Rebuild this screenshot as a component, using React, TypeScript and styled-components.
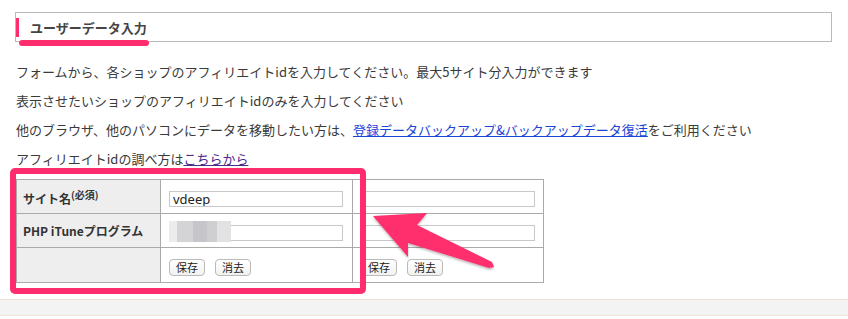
import styled, { createGlobalStyle } from "styled-components";

const PINK = "#ff2d6d";

const GlobalStyle = createGlobalStyle`
  body {
    margin: 0;
    background: #fff;
    font-family: "Noto Sans CJK JP", "Noto Sans", sans-serif;
  }
`;

const Page = styled.div`
  position: relative;
  width: 848px;
  height: 319px;
  overflow: hidden;
`;

const Content = styled.div`
  padding: 12px 0 0 15px;
`;

const HeadingBox = styled.div`
  width: 815px;
  height: 28px;
  border: 1px solid #bbb;
  display: flex;
  align-items: center;
`;

const HeadingBar = styled.span`
  width: 3px;
  height: 19px;
  background: ${PINK};
  margin-right: 11px;
`;

const HeadingText = styled.h2`
  margin: 0;
  font-size: 13px;
  font-weight: bold;
  color: #444;
`;

const Notes = styled.div`
  margin-top: 15px;
  padding-left: 1px;
  font-size: 13px;
  line-height: 29px;
  color: #3a3a3a;
`;

const Note = styled.p`
  margin: 0;
  white-space: nowrap;
`;

const Link = styled.a<{ $visited?: boolean }>`
  color: ${(p) => (p.$visited ? "#4b2a8c" : "#1a44d6")};
  text-decoration: underline;
`;

const Table = styled.table`
  margin: 6px 0 0 1px;
  border-collapse: collapse;
  border: 1px solid #aaa;
`;

const Row = styled.tr<{ $h?: number }>`
  height: ${(p) => p.$h ?? 34}px;
`;

const HeadCell = styled.th`
  width: 131px;
  background: #eee;
  border: 1px solid #aaa;
  text-align: left;
  padding: 0 6px;
  font-size: 12px;
  font-weight: bold;
  color: #333;
`;

const Sup = styled.sup`
  font-size: 10px;
  font-weight: bold;
`;

const Cell = styled.td<{ $w: number }>`
  width: ${(p) => p.$w}px;
  border: 1px solid #aaa;
  padding: 0 8px;
  box-sizing: border-box;
`;

const InputWrap = styled.span`
  position: relative;
  display: inline-block;
  vertical-align: middle;
`;

const Input = styled.input`
  display: block;
  width: 174px;
  height: 16px;
  box-sizing: border-box;
  border: 1px solid #c8c8c8;
  padding: 0 3px;
  font-family: "Noto Sans", sans-serif;
  font-size: 13px;
  color: #222;
  background: #fff;
`;

const Mosaic = styled.span`
  position: absolute;
  left: 0;
  top: -4px;
  width: 62px;
  height: 21px;
  background: linear-gradient(
    to right,
    #ececec 0 8px,
    #d4d4d6 8px 24px,
    #c6c6ca 24px 38px,
    #cfcfd1 38px 48px,
    #e2e2e2 48px 62px
  );
`;

const Button = styled.button`
  width: 36px;
  height: 17px;
  padding: 0;
  margin-right: 10px;
  border: 1px solid #bbb;
  border-radius: 4px;
  background: linear-gradient(#fff, #f1f1f1);
  font-family: "Noto Sans CJK JP", sans-serif;
  font-size: 11px;
  line-height: 15px;
  color: #222;
  vertical-align: middle;
`;

const Footer = styled.div`
  margin-top: 16px;
  height: 15px;
  background: #f3f3f3;
  border-top: 1px solid #ece5d7;
  border-bottom: 1px solid #ece5d7;
`;

const Frame = styled.div`
  position: absolute;
  left: 10px;
  top: 168px;
  width: 356px;
  height: 126px;
  box-sizing: border-box;
  border: 6px solid ${PINK};
  border-radius: 5px;
`;

const Underline = styled.div`
  position: absolute;
  left: 19px;
  top: 40px;
  width: 130px;
  height: 6px;
  border-radius: 3px;
  background: ${PINK};
`;

const Overlay = styled.svg`
  position: absolute;
  left: 0;
  top: 0;
  pointer-events: none;
`;

const columns = [192, 190];

function App() {
  return (
    <Page>
      <GlobalStyle />
      <Content>
        <HeadingBox>
          <HeadingBar />
          <HeadingText>ユーザーデータ入力</HeadingText>
        </HeadingBox>
        <Notes>
          <Note>フォームから、各ショップのアフィリエイトidを入力してください。最大5サイト分入力ができます</Note>
          <Note>表示させたいショップのアフィリエイトidのみを入力してください</Note>
          <Note>
            他のブラウザ、他のパソコンにデータを移動したい方は、
            <Link href="#">登録データバックアップ&amp;バックアップデータ復活</Link>
            をご利用ください
          </Note>
          <Note>
            アフィリエイトidの調べ方は<Link href="#" $visited>こちらから</Link>
          </Note>
        </Notes>
        <Table>
          <tbody>
            <Row>
              <HeadCell>
                サイト名<Sup>(必須)</Sup>
              </HeadCell>
              {columns.map((w, i) => (
                <Cell key={i} $w={w}>
                  <InputWrap>
                    <Input defaultValue={i === 0 ? "vdeep" : ""} />
                  </InputWrap>
                </Cell>
              ))}
            </Row>
            <Row>
              <HeadCell>PHP iTuneプログラム</HeadCell>
              {columns.map((w, i) => (
                <Cell key={i} $w={w}>
                  <InputWrap>
                    <Input defaultValue="" />
                    {i === 0 && <Mosaic />}
                  </InputWrap>
                </Cell>
              ))}
            </Row>
            <Row $h={35}>
              <HeadCell />
              {columns.map((w, i) => (
                <Cell key={i} $w={w}>
                  <Button>保存</Button>
                  <Button>消去</Button>
                </Cell>
              ))}
            </Row>
          </tbody>
        </Table>
      </Content>
      <Footer />

      <Underline />
      <Frame />
      <Overlay width="848" height="319" viewBox="0 0 848 319">
        <defs>
          <filter id="shadow" x="-10%" y="-10%" width="130%" height="140%">
            <feDropShadow dx="0" dy="1.5" stdDeviation="1.2" floodColor="#000" floodOpacity="0.3" />
          </filter>
        </defs>
        <polygon
          points="373,216 427,213 417,225 492,262 494,267 489,268 408,243 408,257"
          fill={PINK}
          strokeLinejoin="round"
          filter="url(#shadow)"
        />
      </Overlay>
    </Page>
  );
}

export default App;
